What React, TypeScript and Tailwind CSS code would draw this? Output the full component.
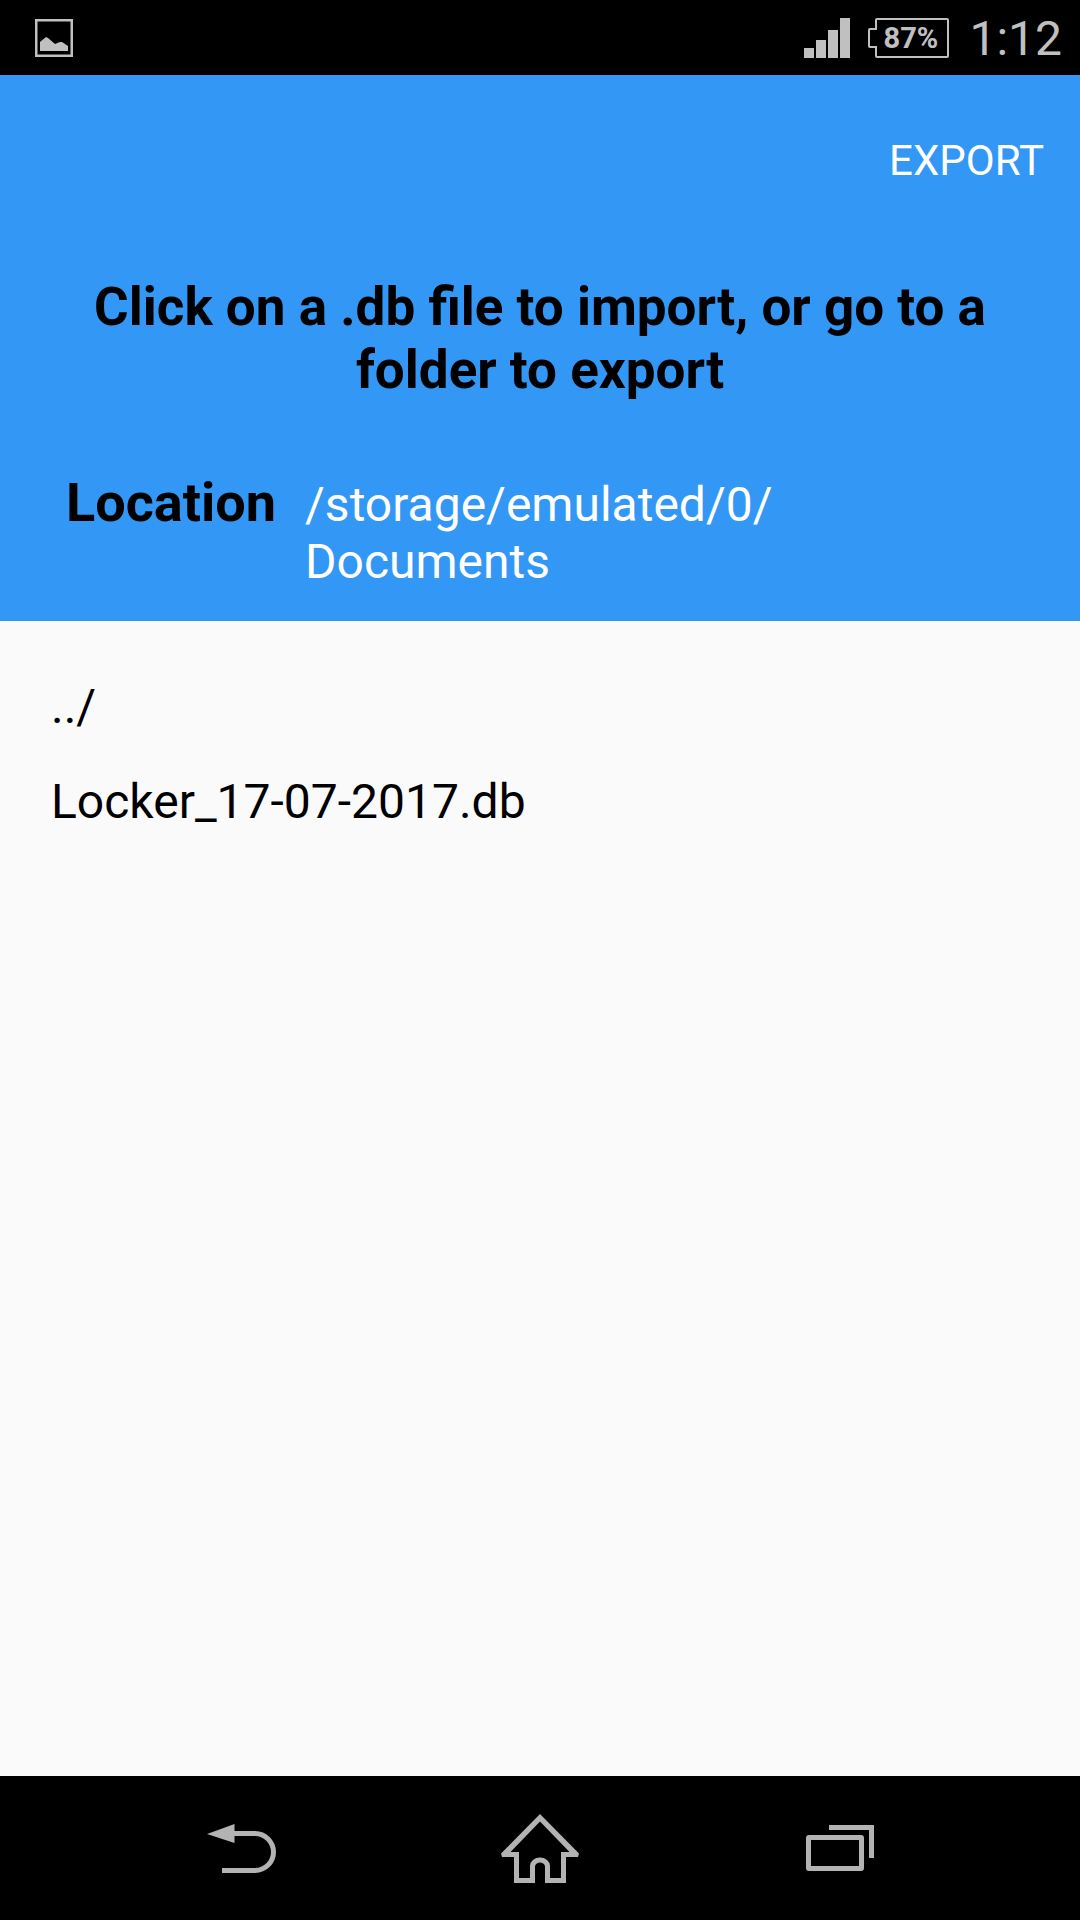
import React from "react";

const files = ["../", "Locker_17-07-2017.db"];

function PictureIcon() {
  return (
    <svg width="38" height="38" viewBox="0 0 38 38" aria-hidden="true">
      <rect x="1.25" y="1.25" width="35.5" height="35.5" fill="none" stroke="#c0c0c0" strokeWidth="2.5" />
      <path d="M5 32V23L11 18L13 19L20 25L25 23L27 23L33 27V32Z" fill="#c0c0c0" />
    </svg>
  );
}

function SignalIcon() {
  return (
    <svg width="46" height="40" viewBox="0 0 46 40" fill="#c0c0c0" aria-hidden="true">
      <rect x="0" y="30" width="10" height="10" />
      <rect x="12" y="22" width="10" height="18" />
      <rect x="24" y="12" width="10" height="28" />
      <rect x="36" y="0" width="10" height="40" />
    </svg>
  );
}

function Battery() {
  return (
    <div className="relative flex h-10 w-[81px] items-center justify-center pl-1 text-[29px] leading-10 font-bold">
      <svg className="absolute inset-0" width="81" height="40" viewBox="0 0 81 40" aria-hidden="true">
        <path
          d="M9 1H79Q80 1 80 2V38Q80 39 79 39H9Q8 39 8 38V29H2Q1 29 1 28V12Q1 11 2 11H8V2Q8 1 9 1Z"
          fill="none"
          stroke="#c0c0c0"
          strokeWidth="2"
        />
      </svg>
      <span className="relative">87%</span>
    </div>
  );
}

function BackIcon() {
  return (
    <svg width="72" height="52" viewBox="-3 -2 72 52" aria-hidden="true">
      <path d="M0 10L27.500 0V19Z" fill="#b3b3b3" />
      <path d="M27 9.500H48A18.500 18.500 0 0 1 48 46.500H15" fill="none" stroke="#b3b3b3" strokeWidth="5" />
    </svg>
  );
}

function HomeIcon() {
  return (
    <svg width="78" height="72" viewBox="0 -2 78 72" aria-hidden="true">
      <path
        fill="#b3b3b3"
        fillRule="evenodd"
        d="M39 0L78 39.500L77 43H65V69H44V52.500A5 4 0 0 0 39 48.500A5 4 0 0 0 34 52.500V69H13V43H1L0 39.500ZM39 7.500L9.500 38H18V64H29V52A10 8.500 0 0 1 49 52V64H60V38H68.500Z"
      />
    </svg>
  );
}

function RecentsIcon() {
  return (
    <svg width="68" height="46" viewBox="0 0 68 46" fill="none" stroke="#b3b3b3" strokeWidth="5" aria-hidden="true">
      <rect x="2.500" y="12.500" width="53" height="31" rx="0.500" />
      <path d="M23 2.500H65.500V33" />
    </svg>
  );
}

export default function App() {
  return (
    <div className="flex min-h-screen flex-col bg-[#fafafa] font-['Roboto',sans-serif] text-black">
      <div className="flex h-[75px] items-center bg-black pr-[18px] pl-[35px] text-[#c0c0c0]">
        <PictureIcon />
        <div className="ml-auto flex items-center">
          <SignalIcon />
          <div className="ml-[18px]">
            <Battery />
          </div>
          <span className="ml-5 pt-[2px] text-[48px] leading-[57px]">1:12</span>
        </div>
      </div>

      <header className="bg-[#3397f6] pt-[61px] pb-[31px]">
        <div className="flex justify-end pr-9">
          <button type="button" className="text-[42px] leading-[50px] text-white">
            EXPORT
          </button>
        </div>
        <h1 className="mt-[90px] px-12 text-center text-[53px] leading-[63px] font-bold">
          Click on a .db file to import, or go to a folder to export
        </h1>
        <div className="mt-[69px] flex items-baseline gap-[29px] pr-[72px] pl-[66px]">
          <h2 className="text-[54px] leading-[63px] font-bold">Location</h2>
          <p className="text-[48px] leading-[57px] text-white">
            /storage/emulated/0/
            <wbr />
            Documents
          </p>
        </div>
      </header>

      <main className="grow pt-[38px]">
        <ul>
          {files.map((name) => (
            <li key={name}>
              <button type="button" className="block w-full px-[51px] py-[19px] text-left text-[48px] leading-[57px]">
                {name}
              </button>
            </li>
          ))}
        </ul>
      </main>

      <nav className="grid h-36 grid-cols-3 items-center bg-black px-[90px]">
        <button type="button" aria-label="Back" className="flex justify-center">
          <BackIcon />
        </button>
        <button type="button" aria-label="Home" className="flex justify-center">
          <HomeIcon />
        </button>
        <button type="button" aria-label="Recent apps" className="flex justify-center">
          <RecentsIcon />
        </button>
      </nav>
    </div>
  );
}
